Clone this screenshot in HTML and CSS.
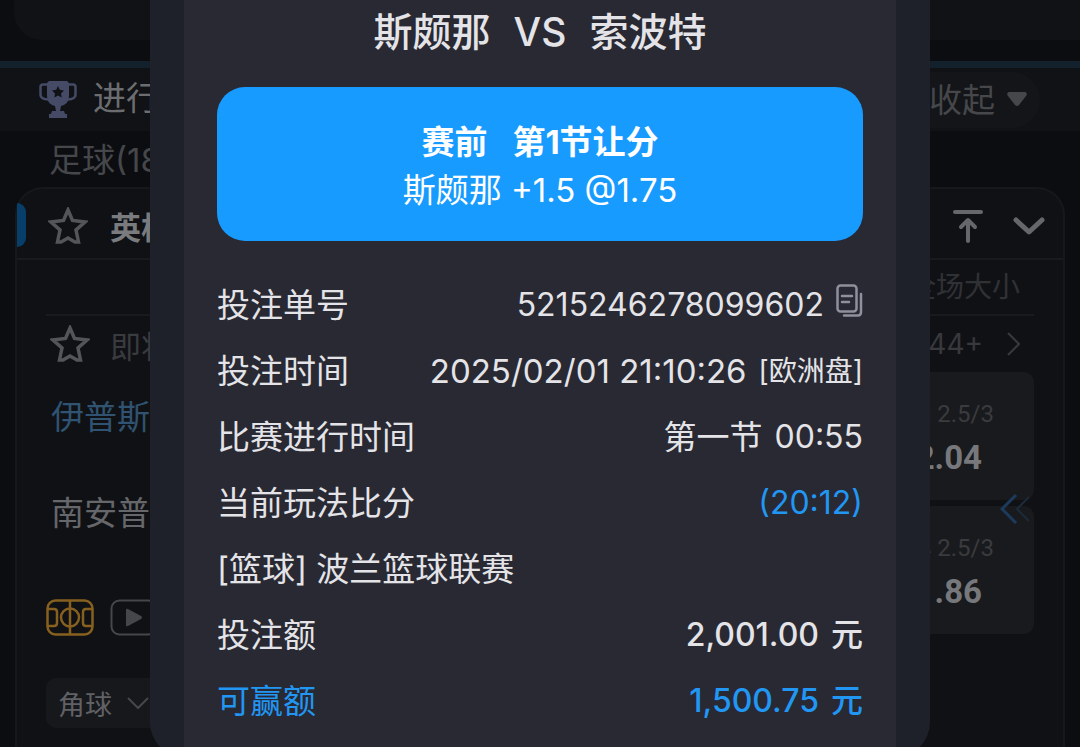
FILE: index.html
```html
<!DOCTYPE html>
<html lang="zh-CN">
<head>
    <meta charset="UTF-8">
    <meta name="viewport" content="width=device-width, initial-scale=1.0">
    <title>投注单</title>
    <link rel="stylesheet" href="styles.css">
</head>
<body>
    <div class="page">
        <div class="top-card"></div>

        <header class="live-bar">
            <svg class="trophy" viewBox="0 0 38 37" aria-hidden="true">
                <path d="M10 3.500H4q-2.500 0-2.500 2.500v8q0 4 8 4.500M28 3.500h6q2.500 0 2.500 2.500v8q0 4-8 4.500" fill="none" stroke="currentColor" stroke-width="2.500"/>
                <path fill="currentColor" fill-rule="evenodd" d="M10 0h18l2 2v13q0 8-8 10l-1 5h4l1 3h2v4H10v-4h2l1-3h4l-1-5q-8-2-8-10V2zM19 5l-1.800 3.800-4.200.6 3 3-.7 4.200L19 14.600l3.700 2-.7-4.200 3-3-4.200-.6z"/>
            </svg>
            <span class="live-title">进行</span>
            <button type="button" class="collapse">收起
                <svg viewBox="0 0 20 15" width="20" height="15" aria-hidden="true"><path fill="currentColor" d="M2 0h16q3 1 1 4l-7 9q-2 2-4 0L1 4q-2-3 1-4z"/></svg>
            </button>
        </header>

        <div class="sport">足球(18</div>

        <section class="league">
            <div class="league-head">
                <button type="button" class="icon-btn" aria-label="收藏联赛">
                    <svg viewBox="0 0 40 38" width="40" height="38"><path d="M20 3l4.500 10.500L37 15l-9 8 2.500 12H27l-7-4-7 4H9.500L12 23l-9-8 12.500-1.500z" fill="none" stroke="currentColor" stroke-width="3.500"/></svg>
                </button>
                <h2>英格</h2>
                <div class="league-tools">
                    <button type="button" class="icon-btn" aria-label="置顶">
                        <svg viewBox="0 0 30 34" width="30" height="34"><path d="M2 3h26M15 32V12M8 18l7-7 7 7" fill="none" stroke="currentColor" stroke-width="4" stroke-linecap="round" stroke-linejoin="round"/></svg>
                    </button>
                    <button type="button" class="icon-btn" aria-label="展开">
                        <svg viewBox="0 0 32 20" width="32" height="20"><path d="M3 4l13 12L29 4" fill="none" stroke="currentColor" stroke-width="5" stroke-linecap="round" stroke-linejoin="round"/></svg>
                    </button>
                </div>
            </div>

            <div class="match">
                <div class="market-head">全场大小</div>

                <div class="match-head">
                    <button type="button" class="icon-btn" aria-label="收藏比赛">
                        <svg viewBox="0 0 40 38" width="40" height="38"><path d="M20 3l4.500 10.500L37 15l-9 8 2.500 12H27l-7-4-7 4H9.500L12 23l-9-8 12.500-1.500z" fill="none" stroke="currentColor" stroke-width="3.500"/></svg>
                    </button>
                    <span class="status">即将</span>
                    <a href="#" class="more">44+
                        <svg viewBox="0 0 14 24" width="14" height="24" aria-hidden="true"><path d="M2 1l11 11L2 23" fill="none" stroke="currentColor" stroke-width="2"/></svg>
                    </a>
                </div>

                <div class="match-body">
                    <div class="teams">
                        <div class="team home">伊普斯</div>
                        <div class="team">南安普</div>
                        <div class="media">
                            <svg class="pitch" viewBox="0 0 48 37" width="48" height="37" aria-hidden="true">
                                <g fill="none" stroke="currentColor" stroke-width="2.500">
                                    <rect x="1.500" y="1.500" width="45" height="34" rx="8"/>
                                    <path d="M24 2v33M2 10h6q3 0 3 3v11q0 3-3 3H2M46 10h-6q-3 0-3 3v11q0 3 3 3h6"/>
                                    <circle cx="24" cy="18.500" r="9"/>
                                </g>
                            </svg>
                            <svg class="video" viewBox="0 0 48 37" width="48" height="37" aria-hidden="true">
                                <rect x="1.500" y="1.500" width="45" height="34" rx="8" fill="none" stroke="currentColor" stroke-width="2"/>
                                <path fill="currentColor" d="M16 11q0-2 2-1l13 7q2 1.500 0 3l-13 7q-2 1-2-1z"/>
                            </svg>
                        </div>
                        <button type="button" class="chip">角球
                            <svg viewBox="0 0 22 12" width="22" height="12" aria-hidden="true"><path d="M1 1l10 10L21 1" fill="none" stroke="currentColor" stroke-width="2"/></svg>
                        </button>
                    </div>

                    <div class="odds">
                        <button type="button" class="odd"><span>大 2.5/3</span><b>2.04</b></button>
                        <button type="button" class="odd"><span>小 2.5/3</span><b>1.86</b></button>
                        <svg class="swipe" viewBox="0 0 32 30" width="32" height="30" aria-hidden="true">
                            <path d="M16 1L2 15l14 14" fill="none" stroke="#1c3a5c" stroke-width="3"/>
                            <path d="M29 3L17 15l12 12" fill="none" stroke="#1d2a3a" stroke-width="2"/>
                        </svg>
                    </div>
                </div>
            </div>
        </section>
    </div>

    <div class="overlay">
        <div class="modal" role="dialog" aria-labelledby="bet-title">
            <div class="ticket">
                <h1 id="bet-title"><span>斯颇那</span><span>VS</span><span>索波特</span></h1>

                <div class="pick">
                    <strong><span>赛前</span><span>第1节让分</span></strong>
                    <p>斯颇那 +1.5 @1.75</p>
                </div>

                <dl class="details">
                    <div>
                        <dt>投注单号</dt>
                        <dd><span class="num">5215246278099602</span>
                            <button type="button" class="copy" aria-label="复制">
                                <svg viewBox="0 0 27 33" width="27" height="33">
                                    <g fill="none" stroke="currentColor" stroke-width="2.500" stroke-linecap="round">
                                        <rect x="1.500" y="1.500" width="19" height="26" rx="3"/>
                                        <path d="M25 10v18q0 3.500-3 3.500H8M6 12h10M6 18h7"/>
                                    </g>
                                </svg>
                            </button>
                        </dd>
                    </div>
                    <div>
                        <dt>投注时间</dt>
                        <dd>2025/02/01 21:10:26 <small>[欧洲盘]</small></dd>
                    </div>
                    <div>
                        <dt>比赛进行时间</dt>
                        <dd>第一节 <span class="num">00:55</span></dd>
                    </div>
                    <div>
                        <dt>当前玩法比分</dt>
                        <dd class="num blue">(20:12)</dd>
                    </div>
                    <div>
                        <dt>[篮球] 波兰篮球联赛</dt>
                    </div>
                    <div>
                        <dt>投注额</dt>
                        <dd class="num money">2,001.00 <span>元</span></dd>
                    </div>
                    <div class="blue">
                        <dt>可赢额</dt>
                        <dd class="num money">1,500.75 <span>元</span></dd>
                    </div>
                </dl>
            </div>
        </div>
    </div>
</body>
</html>
```
FILE: styles.css
```css
* {
    box-sizing: border-box;
}

body {
    margin: 0;
    height: 100vh;
    overflow: hidden;
    background-color: #0c0d11;
    color: #636467;
    font-family: Inter, "Noto Sans CJK SC", sans-serif;
    font-size: 33px;
}

h1, h2, p, dl, dd {
    margin: 0;
}

button {
    padding: 0;
    border: none;
    background: none;
    color: inherit;
    font: inherit;
    cursor: pointer;
}

svg {
    display: block;
    flex: none;
}

/* match list behind the dialog */
.page {
    height: 100%;
    display: flex;
    flex-direction: column;
}

.top-card {
    flex: none;
    height: 40px;
    margin: 0 0 21px 14px;
    background-color: #111216;
    border-bottom-left-radius: 28px;
}

.live-bar {
    flex: none;
    display: flex;
    align-items: center;
    height: 70px;
    padding: 0 40px 0 39px;
    border-top: 7px solid #13212d;
    background-color: #101215;
    line-height: 44px;
}

.trophy {
    width: 38px;
    height: 37px;
    color: #454b66;
}

.live-title {
    margin-left: 16px;
    padding-bottom: 4px;
    color: #6c6d70;
}

.collapse {
    display: flex;
    align-items: center;
    gap: 12px;
    height: 56px;
    margin-left: auto;
    padding: 0 13px 0 40px;
    border-radius: 28px;
    background-color: #131518;
    color: #46474a;
}

.sport {
    flex: none;
    height: 56px;
    padding-left: 49px;
    line-height: 58px;
    color: #46474a;
}

.league {
    flex: 1;
    margin: 0 15px;
    border: 2px solid #17181c;
    border-bottom: none;
    border-radius: 28px 28px 0 0;
    background-color: #101115;
}

.league-head {
    position: relative;
    display: flex;
    align-items: center;
    height: 71px;
    padding: 4px 18px 0 31px;
    border-bottom: 2px solid #191a1e;
}

.league-head::before {
    content: "";
    position: absolute;
    left: 0;
    top: 14px;
    width: 9px;
    height: 44px;
    border-radius: 0 9px 9px 0;
    background-color: #083e6a;
}

.icon-btn {
    color: #545558;
}

.league-head h2 {
    margin-left: 22px;
    color: #7a7b7e;
    font-size: 31px;
    font-weight: 700;
}

.league-tools {
    display: flex;
    align-items: center;
    gap: 30px;
    margin-left: auto;
}

.league-tools .icon-btn {
    color: #66676a;
}

.match {
    padding: 0 29px;
}

.market-head {
    height: 56px;
    padding-right: 14px;
    border-bottom: 2px solid #191a1e;
    line-height: 54px;
    text-align: right;
    font-size: 28px;
    color: #303135;
}

.match-head {
    display: flex;
    align-items: center;
    height: 56px;
    padding: 0 14px 0 4px;
}

.status {
    margin-left: 20px;
    font-size: 31px;
    color: #3a3b3e;
}

.more {
    display: flex;
    align-items: center;
    gap: 23px;
    margin-left: auto;
    color: #38393c;
    font-size: 28px;
    text-decoration: none;
}

.match-body {
    display: flex;
    justify-content: space-between;
}

.team {
    padding-left: 5px;
    margin-bottom: 6px;
    line-height: 90px;
    color: #66676a;
}

.home {
    color: #2f5370;
}

.media {
    display: flex;
    gap: 16px;
    margin: 35px 0 42px;
    padding-top: 6px;
}

.pitch {
    color: #86601f;
}

.video {
    color: #46474a;
}

.chip {
    display: flex;
    align-items: center;
    gap: 15px;
    height: 50px;
    padding: 0 12px;
    border-radius: 10px;
    background-color: #17181c;
    font-size: 27px;
    color: #606164;
}

.chip svg {
    color: #46474a;
}

.odds {
    position: relative;
    display: flex;
    flex-direction: column;
    gap: 6px;
    width: 240px;
}

.odd {
    display: flex;
    flex-direction: column;
    align-items: flex-end;
    justify-content: center;
    height: 128px;
    padding-right: 40px;
    border-radius: 10px;
    background-color: #191a1d;
    font-family: Roboto, "Noto Sans CJK SC", sans-serif;
    font-size: 24px;
    line-height: 44px;
    color: #3a3b3e;
}

.odd b {
    padding-right: 12px;
    font-size: 33px;
    color: #77787b;
}

.swipe {
    position: absolute;
    right: 2px;
    top: 122px;
}

/* bet dialog */
.overlay {
    position: fixed;
    inset: 0 0 -11px;
    display: flex;
    padding: 0 150px;
}

.modal {
    flex: 1;
    padding: 0 34px;
    border-radius: 0 0 36px 36px;
    background-color: #1f212a;
    overflow: hidden;
}

.ticket {
    height: 100%;
    padding: 0 33px;
    background-color: #282932;
    color: #e4e4e8;
}

.ticket h1 {
    display: flex;
    justify-content: center;
    gap: 23px;
    margin-bottom: 23px;
    font-size: 39px;
    font-weight: 500;
    line-height: 64px;
}

.pick {
    margin-bottom: 31px;
    padding: 31px 0 27px;
    border-radius: 28px;
    background-color: #189bff;
    color: #fff;
    text-align: center;
    line-height: 48px;
}

.pick strong {
    display: flex;
    justify-content: center;
    gap: 25px;
    font-weight: 700;
}

.details > div {
    display: flex;
    justify-content: space-between;
    line-height: 66px;
}

.details dd {
    display: flex;
    align-items: center;
    gap: 12px;
}

.details small {
    font-size: 28px;
}

.details .num {
    font-size: 32px;
}

.details .money {
    font-weight: 500;
}

.copy {
    padding-bottom: 10px;
    color: #8f909c;
}

.blue {
    color: #2196f3;
}
```
